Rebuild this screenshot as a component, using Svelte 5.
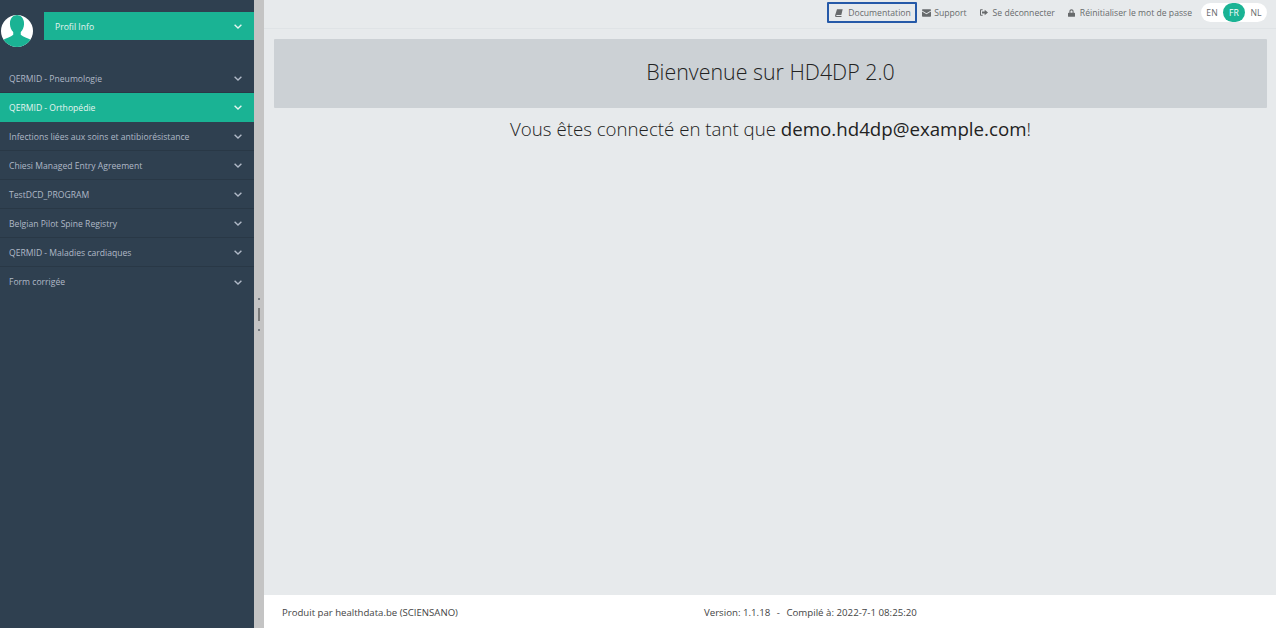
<script>
  const menus = [
    { titre: 'QERMID - Pneumologie' },
    { titre: 'QERMID - Orthopédie', actif: true },
    { titre: 'Infections liées aux soins et antibiorésistance' },
    { titre: 'Chiesi Managed Entry Agreement' },
    { titre: 'TestDCD_PROGRAM' },
    { titre: 'Belgian Pilot Spine Registry' },
    { titre: 'QERMID - Maladies cardiaques' },
    { titre: 'Form corrigée' }
  ];
</script>

{#snippet chevron()}
  <svg class="chevron" viewBox="0 0 8 5" width="8" height="5">
    <path d="M.6 .8 L4 4 L7.4 .8" fill="none" stroke="currentColor" stroke-width="1.4" />
  </svg>
{/snippet}

<div class="page">
  <aside class="sidebar">
    <div class="profil">
      <svg class="avatar" viewBox="0 0 34 34" width="32" height="32">
        <defs><clipPath id="rond"><circle cx="17" cy="17" r="17" /></clipPath></defs>
        <circle cx="17" cy="17" r="17" fill="#fff" />
        <g clip-path="url(#rond)" fill="#1ab394">
          <path d="M9.5 9 C9.5 3.5 13 0 17 0 C21 0 24.5 3.5 24.5 9 C24.5 13 23 16 21 18 L21 21 C23.5 23.5 28 24 33 27 L33 34 L1 34 L1 27 C6 24 10.5 23.5 13 21 L13 18 C11 16 9.5 13 9.5 9 Z" />
        </g>
      </svg>
      <div class="profil-btn">
        <span>Profil Info</span>
        {@render chevron()}
      </div>
    </div>
    <nav class="menu">
      {#each menus as m}
        <div class="item" class:actif={m.actif}>
          <span>{m.titre}</span>
          {@render chevron()}
        </div>
      {/each}
    </nav>
  </aside>

  <div class="splitter">
    <i class="point"></i>
    <i class="barre"></i>
    <i class="point"></i>
  </div>

  <div class="contenu">
    <header class="topbar">
      <a class="lien doc" href="#doc">
        <svg viewBox="0 0 12 12" width="8" height="8"><path d="M3 .5 H11.5 L9.5 9 H2.5 C1.5 9 1.5 10.5 2.5 10.5 H10 L9.5 12 H1.5 C0 12 0 10 .3 9 Z" fill="currentColor" /></svg>
        Documentation
      </a>
      <a class="lien support" href="#support">
        <svg viewBox="0 0 12 10" width="9" height="8"><path d="M0 1 C0 .4 .4 0 1 0 H11 C11.6 0 12 .4 12 1 V1.6 L6 5.4 L0 1.6 Z M0 3 L6 6.8 L12 3 V9 C12 9.6 11.6 10 11 10 H1 C.4 10 0 9.6 0 9 Z" fill="currentColor" /></svg>
        Support
      </a>
      <a class="lien deco" href="#deco">
        <svg viewBox="0 0 12 10" width="8" height="7"><path d="M4 0 H1.5 C.6 0 0 .6 0 1.5 V8.5 C0 9.4 .6 10 1.5 10 H4 V8.5 H1.5 V1.5 H4 Z M3 3.5 H7 V1 L12 5 L7 9 V6.5 H3 Z" fill="currentColor" /></svg>
        Se déconnecter
      </a>
      <a class="lien mdp" href="#mdp">
        <svg viewBox="0 0 10 11" width="7" height="8"><path d="M2 5 V3.2 C2 1.4 3.3 .3 5 .3 C6.7 .3 8 1.4 8 3.2 V5 H9 C9.5 5 10 5.4 10 6 V10 C10 10.6 9.5 11 9 11 H1 C.5 11 0 10.6 0 10 V6 C0 5.4 .5 5 1 5 Z M3.5 5 H6.5 V3.2 C6.5 2.3 5.9 1.8 5 1.8 C4.1 1.8 3.5 2.3 3.5 3.2 Z" fill="currentColor" /></svg>
        Réinitialiser le mot de passe
      </a>
      <div class="langues">
        <span>EN</span>
        <span class="on">FR</span>
        <span>NL</span>
      </div>
    </header>

    <main class="corps">
      <div class="banniere">Bienvenue sur HD4DP 2.0</div>
      <p class="connecte">Vous êtes connecté en tant que <b>demo.hd4dp@example.com</b>!</p>
    </main>

    <footer class="pied">
      <span class="produit">Produit par healthdata.be (SCIENSANO)</span>
      <span class="version">Version: 1.1.18 <span class="tiret">-</span> Compilé à: 2022-7-1 08:25:20</span>
    </footer>
  </div>
</div>

<style>
  :global(body) {
    margin: 0;
    font-family: "Open Sans", sans-serif;
  }

  .page {
    display: flex;
    height: 628px;
    overflow: hidden;
    background: #e7eaec;
  }

  .sidebar {
    flex: 0 0 254px;
    background: #2f4050;
    color: #b0b9c7;
    font-size: 8.6px;
  }

  .profil {
    display: flex;
    align-items: flex-start;
    height: 64px;
    padding-top: 12px;
    box-sizing: border-box;
  }

  .avatar {
    margin: 3px 11px 0 1px;
    flex: none;
  }

  .profil-btn {
    flex: 1;
    height: 28px;
    box-sizing: border-box;
    display: flex;
    align-items: center;
    justify-content: space-between;
    padding: 1px 12px 0 11px;
    background: #1ab394;
    color: #e6f5f1;
  }

  .item {
    height: 29px;
    box-sizing: border-box;
    display: flex;
    align-items: center;
    justify-content: space-between;
    padding: 1px 12px 0 9px;
    border-bottom: 1px solid #293846;
  }

  .item:last-child {
    border-bottom: 0;
  }

  .item.actif {
    background: #1ab394;
    color: #e6f5f1;
    border-bottom-color: #1ab394;
  }

  .chevron {
    flex: none;
  }

  .splitter {
    flex: 0 0 10px;
    background: #c4c4c4;
    display: flex;
    flex-direction: column;
    align-items: center;
    justify-content: center;
    gap: 8px;
    box-sizing: border-box;
  }

  .point {
    width: 2px;
    height: 2px;
    background: #777c82;
  }

  .barre {
    width: 2px;
    height: 13px;
    background: #7b7b7b;
  }

  .contenu {
    flex: 1;
    display: flex;
    flex-direction: column;
    min-width: 0;
  }

  .topbar {
    height: 29px;
    flex: none;
    box-sizing: border-box;
    display: flex;
    align-items: center;
    justify-content: flex-end;
    padding: 0 9px 3px 0;
    border-bottom: 1px solid #dfe3e6;
    font-size: 8.65px;
    color: #676a6c;
  }

  .lien {
    color: #676a6c;
    text-decoration: none;
    display: flex;
    align-items: center;
    white-space: nowrap;
  }

  .doc {
    height: 21px;
    width: 90px;
    box-sizing: border-box;
    padding-left: 6px;
    border: 2px solid #2559a8;
    border-radius: 1px;
    gap: 5px;
  }

  .support { margin-left: 5px; gap: 3px; }
  .deco { margin-left: 13px; gap: 5px; }
  .mdp { margin-left: 13px; gap: 5px; }

  .langues {
    display: flex;
    margin-left: 9px;
    background: #fff;
    border-radius: 10px;
    height: 19px;
  }

  .langues span {
    width: 22px;
    height: 19px;
    display: flex;
    align-items: center;
    justify-content: center;
    border-radius: 10px;
  }

  .langues .on {
    background: #1ab394;
    color: #fff;
  }

  .corps {
    flex: 1;
    padding: 10px 9px 0 10px;
  }

  .banniere {
    height: 69px;
    box-sizing: border-box;
    padding-bottom: 5px;
    display: flex;
    align-items: center;
    justify-content: center;
    background: #ccd1d5;
    font-size: 21.4px;
    font-weight: 300;
    color: #222;
    border-radius: 1px;
  }

  .connecte {
    margin: 8px 0 0;
    text-align: center;
    font-size: 18.7px;
    font-weight: 300;
    color: #222;
  }

  .connecte b {
    font-weight: 400;
    color: #222;
  }

  .pied {
    height: 33px;
    flex: none;
    box-sizing: border-box;
    padding: 2px 0 0 18px;
    background: #fff;
    display: flex;
    align-items: center;
    font-size: 9.6px;
    color: #444;
  }

  .version {
    margin-left: 246px;
    font-size: 9.7px;
  }

  .tiret {
    margin: 0 4px;
  }
</style>
